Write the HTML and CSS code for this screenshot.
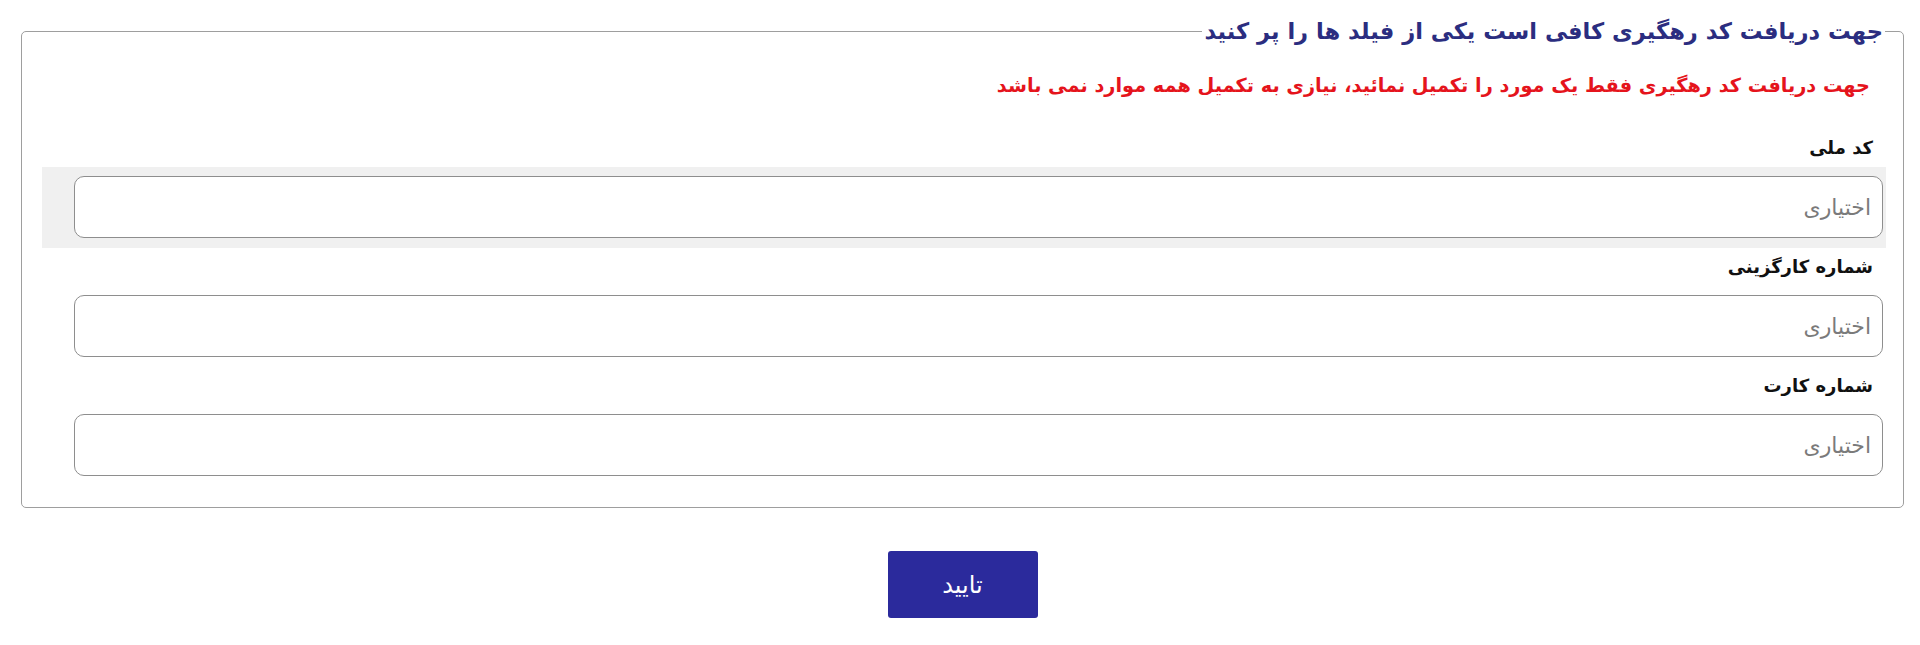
FILE: index.html
```html
<!DOCTYPE html>
<html lang="fa" dir="rtl">
<head>
<meta charset="utf-8">
<title>دریافت کد رهگیری</title>
<link rel="stylesheet" href="styles.css">
</head>
<body>
<div class="page">
  <form class="tracking-form">
    <fieldset class="box">
      <legend class="box-title">جهت دریافت کد رهگیری کافی است یکی از فیلد ها را پر کنید</legend>
      <p class="note">جهت دریافت کد رهگیری فقط یک مورد را تکمیل نمائید، نیازی به تکمیل همه موارد نمی باشد</p>
      <div class="field field-first">
        <label class="field-label" for="nid">کد ملی</label>
        <div class="input-wrap input-wrap-active">
          <input class="field-input" id="nid" type="text" placeholder="اختیاری">
        </div>
      </div>
      <div class="field">
        <label class="field-label" for="pid">شماره کارگزینی</label>
        <div class="input-wrap">
          <input class="field-input" id="pid" type="text" placeholder="اختیاری">
        </div>
      </div>
      <div class="field">
        <label class="field-label" for="cid">شماره کارت</label>
        <div class="input-wrap">
          <input class="field-input" id="cid" type="text" placeholder="اختیاری">
        </div>
      </div>
    </fieldset>
    <div class="actions">
      <button class="submit" type="button">تایید</button>
    </div>
  </form>
</div>
</body>
</html>
```

FILE: styles.css
```css
* { box-sizing: border-box; }

html, body {
  margin: 0;
  background: #ffffff;
}

body {
  font-family: "DejaVu Sans", "Noto Sans", sans-serif;
  direction: rtl;
  color: #111111;
}

.page {
  padding: 17px 16px 0 21px;
}

.tracking-form {
  margin: 0;
}

.box {
  margin: 0;
  min-width: 0;
  border: 1px solid #9e9e9e;
  border-radius: 5px;
  padding: 0 17px 21px 20px;
}

.box-title {
  margin-right: 1px;
  padding: 0 2px;
  font-size: 22.6px;
  line-height: 28px;
  font-weight: bold;
  color: #2b2d80;
}

.note {
  margin: 27px 0 0;
  padding-right: 16px;
  font-size: 19.3px;
  line-height: 28px;
  font-weight: bold;
  color: #e5141c;
}

.field {
  display: flex;
  flex-direction: column;
}

.field-first {
  margin-top: 29px;
}

.field-label {
  margin: 5px 0 5px;
  padding-right: 13px;
  font-size: 18px;
  line-height: 28px;
  font-weight: bold;
  color: #111111;
}

.input-wrap {
  padding: 9px 3px 10px 32px;
}

.input-wrap-active {
  background: #f0f0f0;
}

.field-input {
  display: block;
  width: 100%;
  height: 62px;
  margin: 0;
  border: 1px solid #8e8e8e;
  border-radius: 10px;
  background: #ffffff;
  padding: 0 11px;
  font-family: "DejaVu Sans", "Noto Sans", sans-serif;
  font-size: 22px;
  color: #333333;
  direction: rtl;
  outline: none;
}

.field-input::placeholder {
  color: #7a7a7a;
  opacity: 1;
}

.actions {
  display: flex;
  justify-content: center;
  padding-top: 43px;
}

.submit {
  width: 150px;
  height: 67px;
  border: 0;
  border-radius: 3px;
  background: #2b2a9c;
  color: #ffffff;
  font-family: "DejaVu Sans", "Noto Sans", sans-serif;
  font-size: 24px;
  cursor: pointer;
}
```
